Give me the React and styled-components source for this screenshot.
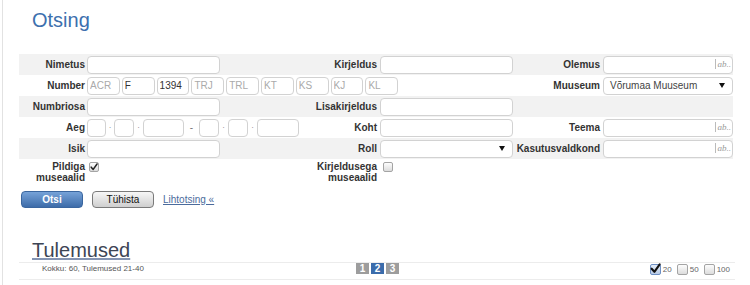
import React from "react";
import styled, { createGlobalStyle } from "styled-components";

const GlobalStyle = createGlobalStyle`
  html, body {
    margin: 0;
    padding: 0;
    background: #fff;
  }
  body {
    font-family: "Liberation Sans", Arial, sans-serif;
    color: #333;
  }
`;

const Page = styled.div`
  margin-left: 2px;
  min-height: 285px;
  border-left: 1px solid #e2e2e2;
  box-sizing: border-box;
`;

const Title = styled.h1`
  margin: 0;
  padding: 9px 0 0 29px;
  font-size: 20px;
  line-height: 23px;
  font-weight: normal;
  color: #3d70ae;
`;

const Form = styled.div`
  margin: 22px 0 0 16px;
  width: 714px;
`;

const Row = styled.div`
  display: grid;
  grid-template-columns: 68px 162px 131px 136px 87px 130px;
  align-items: ${(p) => (p.$tall ? "start" : "center")};
  height: ${(p) => (p.$tall ? "24px" : "21px")};
  background: ${(p) => (p.$shaded ? "#f2f2f2" : "transparent")};
`;

const Label = styled.div`
  text-align: right;
  padding-right: ${(p) => (p.$first ? "2px" : "3px")};
  padding-top: ${(p) => (p.$tall ? "2px" : "0")};
  font-size: 10px;
  line-height: 11px;
  font-weight: bold;
  color: #333;
  white-space: nowrap;
`;

const Field = styled.div`
  display: flex;
  align-items: center;
  min-width: 0;
  grid-column: ${(p) => p.$span || "auto"};
  padding-top: ${(p) => (p.$tall ? "3px" : "0")};
`;

const Input = styled.input`
  box-sizing: border-box;
  flex: none;
  width: ${(p) => p.$w || 133}px;
  height: 18px;
  margin: 0;
  padding: 0 2px;
  border: 1px solid #d2d2d2;
  border-radius: 4px;
  background: #fff;
  font-family: "Liberation Sans", Arial, sans-serif;
  font-size: 10px;
  color: #333;
  outline: none;

  &::placeholder {
    color: #aaa;
  }
`;

const NumberGroup = styled.div`
  display: flex;
  gap: 2px;
`;

const DateSep = styled.span`
  flex: none;
  width: ${(p) => p.$w}px;
  text-align: center;
  font-size: ${(p) => (p.$dash ? "10px" : "8px")};
  color: #777;
`;

const InputWrap = styled.div`
  position: relative;
  width: 130px;
`;

const Suffix = styled.span`
  position: absolute;
  right: 2px;
  top: 4px;
  padding-left: 2px;
  border-left: 1px solid #bbb;
  font-family: "Liberation Serif", "Times New Roman", serif;
  font-style: italic;
  font-size: 9px;
  line-height: 10px;
  color: #999;
`;

const Select = styled.div`
  box-sizing: border-box;
  width: ${(p) => p.$w || 133}px;
  height: 18px;
  display: flex;
  align-items: center;
  justify-content: space-between;
  padding: 0 7px 0 6px;
  border: 1px solid #d2d2d2;
  border-radius: 4px;
  background: #fff;
  font-size: 10px;
  color: #444;
`;

const Arrow = styled.span`
  width: 0;
  height: 0;
  border-left: 3px solid transparent;
  border-right: 3px solid transparent;
  border-top: 5px solid #111;
`;

const Box = styled.span`
  box-sizing: border-box;
  display: inline-flex;
  align-items: center;
  justify-content: center;
  width: ${(p) => p.$size || 10}px;
  height: ${(p) => p.$size || 10}px;
  margin-left: ${(p) => p.$offset || 0}px;
  border: 1px solid ${(p) => (p.$blue ? "#6d8fc4" : "#a4a4a4")};
  border-radius: 2px;
  background: ${(p) =>
    p.$blue
      ? "linear-gradient(#e3ecf8, #b9cbe6)"
      : "linear-gradient(#fdfdfd, #dcdcdc)"};
  overflow: visible;
`;

const CheckMark = ({ size = 8, color = "#222", lift = 0 }) => (
  <svg
    width={size}
    height={size}
    viewBox="0 0 10 10"
    style={{ overflow: "visible", marginTop: -lift }}
  >
    <path
      d="M1.5 5.2 L4 8 L8.8 1.2"
      fill="none"
      stroke={color}
      strokeWidth="1.9"
      strokeLinecap="round"
      strokeLinejoin="round"
    />
  </svg>
);

const Buttons = styled.div`
  display: flex;
  align-items: center;
  gap: 9px;
  margin: 8px 0 0 18px;
`;

const Button = styled.button`
  box-sizing: border-box;
  width: 62px;
  height: 17px;
  margin: 0;
  padding: 0;
  border: 1px solid ${(p) => (p.$primary ? "#3a669f" : "#7a7a7a")};
  border-radius: 4px;
  background: ${(p) =>
    p.$primary
      ? "linear-gradient(#76a2d8, #3d6ca9)"
      : "linear-gradient(#f7f7f7, #cfcfcf)"};
  color: ${(p) => (p.$primary ? "#fff" : "#111")};
  font-family: "Liberation Sans", Arial, sans-serif;
  font-size: 10px;
  font-weight: ${(p) => (p.$primary ? "bold" : "normal")};
  line-height: 15px;
`;

const Link = styled.a`
  font-size: 10px;
  color: #4b6b9c;
  text-decoration: underline;
`;

const ResultsTitle = styled.h2`
  margin: 31px 0 0 29px;
  font-size: 20px;
  line-height: 23px;
  font-weight: normal;
  color: #3d4554;
  text-decoration: underline;
  text-decoration-color: #8494b2;
`;

const ResultsBar = styled.div`
  margin-left: 16px;
  width: 716px;
  height: 16px;
  display: grid;
  grid-template-columns: 337px 1fr auto;
  align-items: start;
  border-top: 1px solid #ececec;
  border-bottom: 1px solid #ececec;
`;

const Total = styled.div`
  padding: 1px 0 0 23px;
  font-size: 8px;
  line-height: 9px;
  color: #555;
`;

const Pager = styled.div`
  display: flex;
  gap: 2px;
`;

const PageBox = styled.span`
  width: 13px;
  height: 11px;
  background: ${(p) => (p.$active ? "#3b6cab" : "#9d9d9d")};
  color: #fff;
  font-size: 10px;
  font-weight: bold;
  line-height: 11px;
  text-align: center;
`;

const PerPage = styled.div`
  display: flex;
  align-items: center;
  gap: 5px;
  padding: 1px 5px 0 0;
`;

const PerOption = styled.label`
  display: flex;
  align-items: center;
  gap: 2px;
  font-size: 8px;
  color: #666;
`;

const Ab = () => <Suffix>ab..</Suffix>;

const numberBoxes = [
  { ph: "ACR" },
  { v: "F" },
  { v: "1394" },
  { ph: "TRJ" },
  { ph: "TRL" },
  { ph: "KT" },
  { ph: "KS" },
  { ph: "KJ" },
  { ph: "KL" },
];

export default function App() {
  return (
    <Page>
      <GlobalStyle />
      <Title>Otsing</Title>

      <Form>
        <Row $shaded>
          <Label $first>Nimetus</Label>
          <Field><Input /></Field>
          <Label>Kirjeldus</Label>
          <Field><Input /></Field>
          <Label>Olemus</Label>
          <Field>
            <InputWrap>
              <Input $w={130} />
              <Ab />
            </InputWrap>
          </Field>
        </Row>

        <Row>
          <Label $first>Number</Label>
          <Field $span="2 / 5">
            <NumberGroup>
              {numberBoxes.map((b, i) => (
                <Input key={i} $w={32.8} placeholder={b.ph} defaultValue={b.v} />
              ))}
            </NumberGroup>
          </Field>
          <Label>Muuseum</Label>
          <Field>
            <Select $w={130}>
              Võrumaa Muuseum
              <Arrow />
            </Select>
          </Field>
        </Row>

        <Row $shaded>
          <Label $first>Numbriosa</Label>
          <Field><Input /></Field>
          <Label>Lisakirjeldus</Label>
          <Field><Input /></Field>
        </Row>

        <Row>
          <Label $first>Aeg</Label>
          <Field>
            <Input $w={19} />
            <DateSep $w={8}>·</DateSep>
            <Input $w={20} />
            <DateSep $w={9}>·</DateSep>
            <Input $w={41} />
            <DateSep $w={15} $dash>-</DateSep>
            <Input $w={20} />
            <DateSep $w={9}>·</DateSep>
            <Input $w={20} />
            <DateSep $w={9}>·</DateSep>
            <Input $w={42} />
          </Field>
          <Label>Koht</Label>
          <Field><Input /></Field>
          <Label>Teema</Label>
          <Field>
            <InputWrap>
              <Input $w={130} />
              <Ab />
            </InputWrap>
          </Field>
        </Row>

        <Row $shaded>
          <Label $first>Isik</Label>
          <Field><Input /></Field>
          <Label>Roll</Label>
          <Field>
            <Select>
              <span />
              <Arrow />
            </Select>
          </Field>
          <Label>Kasutusvaldkond</Label>
          <Field>
            <InputWrap>
              <Input $w={130} />
              <Ab />
            </InputWrap>
          </Field>
        </Row>

        <Row $tall>
          <Label $first $tall>
            Pildiga
            <br />
            museaalid
          </Label>
          <Field $tall>
            <Box $offset={2}>
              <CheckMark size={8} />
            </Box>
          </Field>
          <Label $tall>
            Kirjeldusega
            <br />
            museaalid
          </Label>
          <Field $tall>
            <Box $offset={3} />
          </Field>
        </Row>
      </Form>

      <Buttons>
        <Button $primary>Otsi</Button>
        <Button>Tühista</Button>
        <Link href="#">Lihtotsing «</Link>
      </Buttons>

      <ResultsTitle>Tulemused</ResultsTitle>
      <ResultsBar>
        <Total>Kokku: 60, Tulemused 21-40</Total>
        <Pager>
          <PageBox>1</PageBox>
          <PageBox $active>2</PageBox>
          <PageBox>3</PageBox>
        </Pager>
        <PerPage>
          <PerOption>
            <Box $size={11} $blue>
              <CheckMark size={11} color="#111" lift={3} />
            </Box>
            20
          </PerOption>
          <PerOption>
            <Box $size={11} />
            50
          </PerOption>
          <PerOption>
            <Box $size={11} />
            100
          </PerOption>
        </PerPage>
      </ResultsBar>
    </Page>
  );
}
